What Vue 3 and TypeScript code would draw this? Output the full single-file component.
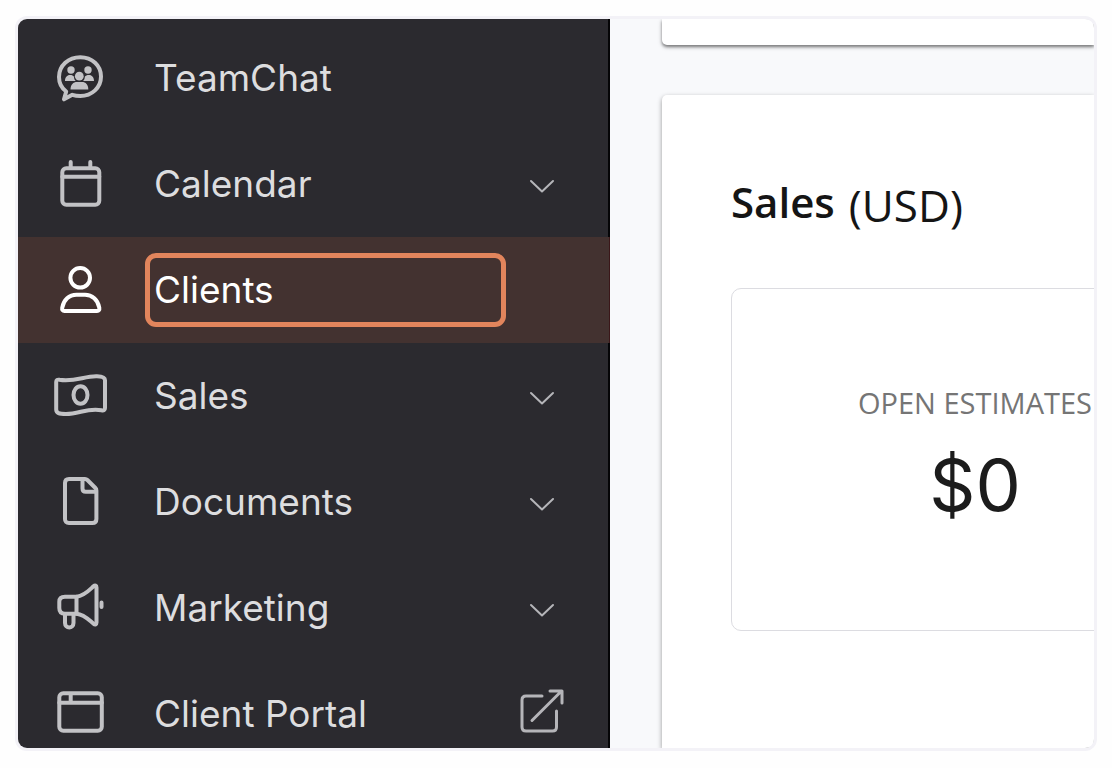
<script setup lang="ts">
type Trailing = 'chevron' | 'external' | 'none'

interface NavItem {
  id: string
  label: string
  trailing: Trailing
  active?: boolean
}

const items: NavItem[] = [
  { id: 'chat', label: 'TeamChat', trailing: 'none' },
  { id: 'calendar', label: 'Calendar', trailing: 'chevron' },
  { id: 'clients', label: 'Clients', trailing: 'none', active: true },
  { id: 'sales', label: 'Sales', trailing: 'chevron' },
  { id: 'documents', label: 'Documents', trailing: 'chevron' },
  { id: 'marketing', label: 'Marketing', trailing: 'chevron' },
  { id: 'portal', label: 'Client Portal', trailing: 'external' },
]
</script>

<template>
  <div class="page">
    <div class="frame">
      <nav class="sidebar" aria-label="Main">
        <component
          :is="item.trailing === 'chevron' ? 'button' : 'a'"
          v-for="item in items"
          :key="item.id"
          class="item"
          :class="{ active: item.active }"
          :href="item.trailing === 'chevron' ? undefined : '#' + item.id"
          :type="item.trailing === 'chevron' ? 'button' : undefined"
          :aria-current="item.active ? 'page' : undefined"
        >
          <svg class="icon" viewBox="0 0 56 56" aria-hidden="true">
            <template v-if="item.id === 'chat'">
              <path d="M14.2 41.5C9.5 38 7 32.500 7 27 7 15.500 16.500 7.200 28.300 7.200S49 15.500 49 26.500 40 46 28.300 46c-3 0-5.500-.4-8-1.200L12 49.300z" />
              <g class="solid">
                <circle cx="19" cy="20" r="3.700" />
                <circle cx="36" cy="20" r="3.700" />
                <circle cx="27.300" cy="26.200" r="4.400" />
                <path d="M13 31c0-3.600 2-6 5-6 2 0 3.200.6 4 1.700 0 1.800.6 3.200 1.800 4.300z" />
                <path d="M42 31c0-3.600-2-6-5-6-2 0-3.400.6-4.200 1.700 0 1.800-.6 3.200-1.800 4.300z" />
                <path d="M18.500 39.500c0-5 2.800-7.500 6.500-7.500h5c3.700 0 6.300 2.500 6.300 7.500z" />
              </g>
            </template>
            <template v-else-if="item.id === 'calendar'">
              <rect x="10.300" y="12.200" width="37" height="36.500" rx="4" />
              <path d="M10.300 20.700h37M18.700 6v6M38.300 6v6" />
            </template>
            <template v-else-if="item.id === 'clients'">
              <circle cx="28.200" cy="15.800" r="9.800" />
              <path d="M12.500 49H45c1.800 0 2.600-1.300 2.300-3.200C46 38 40 32.700 33 32.700h-8.500C17.200 32.700 11.500 38 10.200 45.800 9.900 47.700 10.700 49 12.500 49z" />
            </template>
            <template v-else-if="item.id === 'sales'">
              <path d="M7.500 11.800C22 14.500 33 7.800 45 8.300c5 .2 8 1 8 4V40c0 2-1.200 2.800-3.500 2.300C36 39.500 27 46 14 46c-7 0-9.800-1-9.800-4.500V14c0-2 1.300-2.700 3.300-2.200z" />
              <ellipse cx="28.500" cy="27" rx="7" ry="8.800" />
            </template>
            <template v-else-if="item.id === 'documents'">
              <path d="M17 5h16c1 0 1.700.3 2.400 1l8 8c.7.700 1 1.400 1 2.400V45c0 2.500-1.300 4-4 4H17c-2.700 0-4-1.500-4-4V9c0-2.500 1.300-4 4-4z" />
              <path d="M30.500 5.500v9c0 2.300 1 3.300 3.300 3.300h10" />
            </template>
            <template v-else-if="item.id === 'marketing'">
              <path d="M24.500 16.700H13c-4 0-5.700 2-5.700 5V28c0 4 2 5.700 5.700 5.700h11.500z" />
              <path d="M24.500 16.700C32 16 37 10.500 41.500 6.300c1.600-1.400 3-.8 3 1.200v35c0 2-1.300 2.600-3 1.200-5-4.200-9.500-9.400-17-10" />
              <path d="M13 34v9c0 6 8.500 6 8.500 0v-9M49.500 22.500V27" />
            </template>
            <template v-else>
              <rect x="7.300" y="7.300" width="42.500" height="37.400" rx="4" />
              <path d="M7.300 16.700h42.500M18.700 8v8" />
            </template>
          </svg>
          <span class="label">{{ item.label }}</span>
          <svg v-if="item.trailing === 'chevron'" class="trail" viewBox="0 0 56 56" aria-hidden="true">
            <path d="M17 25l11 10.500 11-10.500" />
          </svg>
          <svg v-else-if="item.trailing === 'external'" class="trail wide" viewBox="0 0 56 56" aria-hidden="true">
            <path d="M28 10H12c-2.500 0-4 1.500-4 4v27c0 2.500 1.500 4 4 4h26.500c2.500 0 4-1.500 4-4V25" />
            <path d="M18 34.500L47 5.500M36 5h12v12" />
          </svg>
        </component>
      </nav>

      <main class="content">
        <section class="card top"></section>
        <section class="card sales">
          <h2 class="title"><span>Sales</span> <span class="unit">(USD)</span></h2>
          <div class="stat">
            <span class="caption">OPEN ESTIMATES</span>
            <span class="amount">$0</span>
          </div>
        </section>
      </main>
    </div>
  </div>
</template>

<style>
body {
  margin: 0;
  background: #fefefe;
}
</style>

<style scoped>
.page {
  box-sizing: border-box;
  height: 100vh;
  padding: 16px 15px 17px;
}

.frame {
  box-sizing: border-box;
  display: flex;
  height: 100%;
  border: 3px solid #f3f2f7;
  border-radius: 12px;
  overflow: hidden;
  background: #f8f9fb;
}

.sidebar {
  flex: none;
  box-sizing: border-box;
  width: 592px;
  padding-top: 6px;
  background: #2b2a2f;
  box-shadow: inset -2px 0 #050507;
}

.item {
  box-sizing: border-box;
  display: flex;
  align-items: center;
  width: 100%;
  height: 106px;
  padding: 0 40px 0 34px;
  border: 0;
  background: none;
  color: #dddddf;
  font: 400 37px/44px Inter, "Liberation Sans", sans-serif;
  text-align: left;
  text-decoration: none;
  cursor: pointer;
}

.active {
  background: #433230;
  box-shadow: inset -1px 0 #3a1719;
  color: #fff;
}

.icon,
.trail {
  flex: none;
  width: 56px;
  height: 56px;
  fill: none;
  stroke: #c2c2c5;
  stroke-width: 4;
  stroke-linecap: round;
  stroke-linejoin: round;
}

.trail {
  stroke: #b5b5b9;
  stroke-width: 2;
}

.trail.wide {
  stroke-width: 3;
}

.solid {
  fill: #c2c2c5;
  stroke: none;
}

.active .icon {
  stroke: #fff;
}

.label {
  box-sizing: border-box;
  width: 361px;
  margin: 0 8px 0 37px;
  padding: 10px 0 10px 4px;
  border: 5px solid transparent;
  border-radius: 11px;
}

.active .label {
  border-color: #e2855c;
}

.content {
  flex: 1;
  min-width: 0;
  display: flex;
  flex-direction: column;
  gap: 50px;
  padding-left: 52px;
  overflow: hidden;
}

.card {
  background: #fff;
}

.top {
  flex: none;
  height: 26px;
  border-radius: 0 0 0 5px;
  box-shadow: 0 2px 3px rgba(0, 0, 0, 0.4), 0 2px 5px rgba(0, 0, 0, 0.2);
}

.sales {
  flex: 1;
  padding: 81px 0 0 69px;
  border-radius: 5px 0 0;
  box-shadow: 0 2px 5px rgba(0, 0, 0, 0.4);
}

.title {
  display: flex;
  align-items: flex-start;
  gap: 14px;
  margin: 0 0 54px;
  color: #151515;
  font: 600 42px/52px "Open Sans", "Noto Sans", sans-serif;
}

.unit {
  font-size: 44px;
  font-weight: 400;
  line-height: 58px;
}

.stat {
  box-sizing: border-box;
  display: flex;
  flex-direction: column;
  align-items: center;
  justify-content: center;
  width: 488px;
  height: 343px;
  padding-top: 10px;
  border: 1px solid #dcdce1;
  border-radius: 10px;
}

.caption {
  color: #757575;
  font: 400 29px/40px "Open Sans", "Noto Sans", sans-serif;
}

.amount {
  color: #1c1c1c;
  font: 400 72px/124px Inter, "Liberation Sans", sans-serif;
}
</style>
